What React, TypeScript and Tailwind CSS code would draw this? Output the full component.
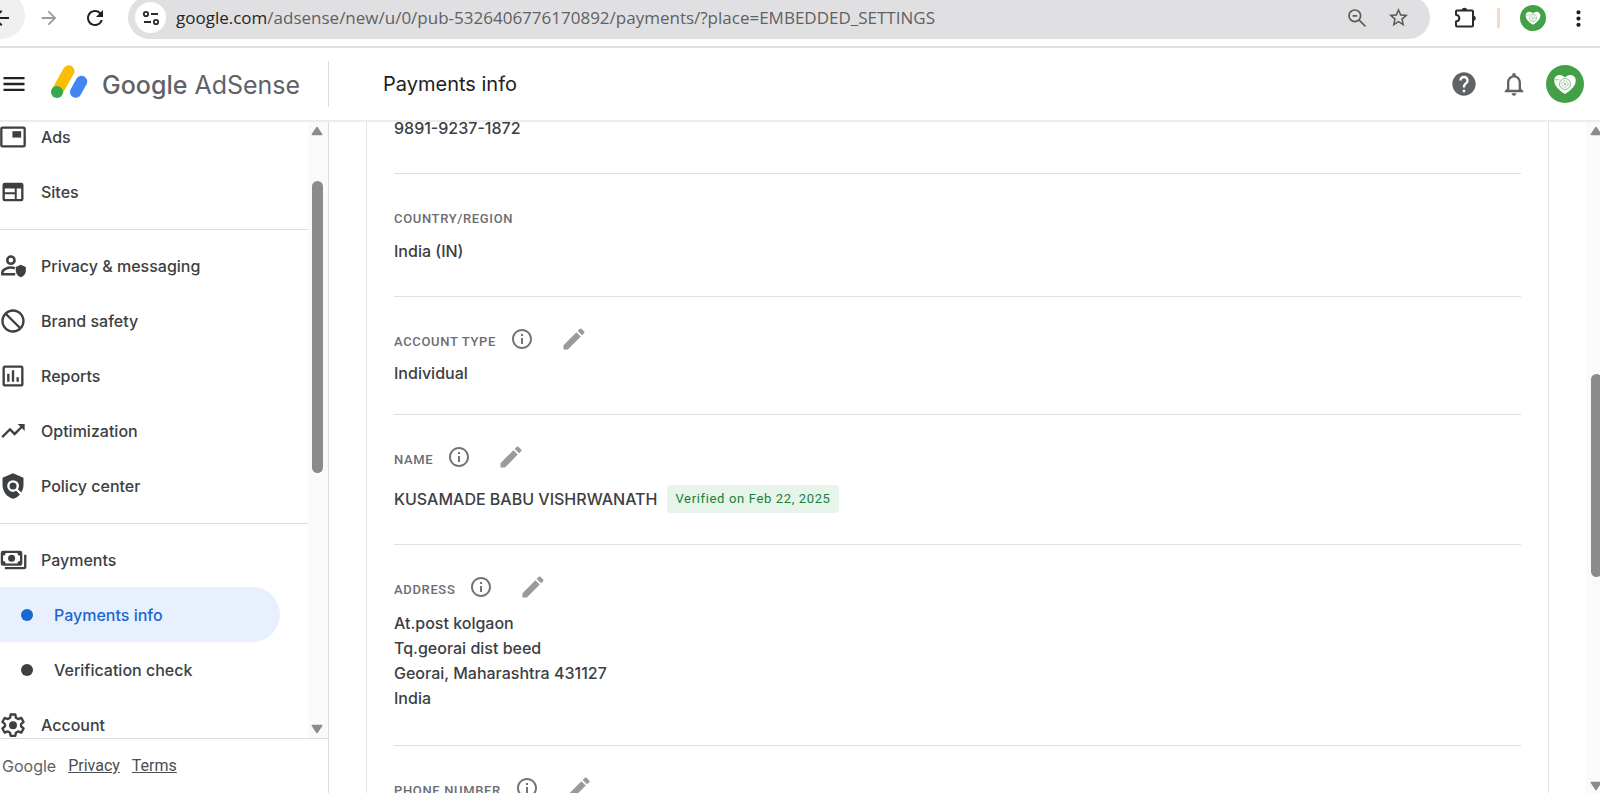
import type { ReactNode } from "react";
import {
  MdArrowBack,
  MdArrowForward,
  MdBlock,
  MdEdit,
  MdHelp,
  MdInfoOutline,
  MdMenu,
  MdMoreVert,
  MdNotificationsNone,
  MdOutlineInsertChartOutlined,
  MdPolicy,
  MdRefresh,
  MdStarOutline,
  MdTrendingUp,
} from "react-icons/md";

const ICON = "h-7 w-7 shrink-0";

function AdsIcon() {
  return (
    <svg viewBox="0 0 24 24" fill="currentColor" className={ICON}>
      <path d="M11.500 7H19v5.500h-7.500z" />
      <path fillRule="evenodd" d="M3 3h18a2 2 0 0 1 2 2v14a2 2 0 0 1-2 2H3a2 2 0 0 1-2-2V5a2 2 0 0 1 2-2zm0 2v14h18V5z" />
    </svg>
  );
}

function SitesIcon() {
  return (
    <svg viewBox="0 0 24 24" fill="currentColor" className={ICON}>
      <path
        fillRule="evenodd"
        d="M5 4h14a2 2 0 0 1 2 2v12a2 2 0 0 1-2 2H5a2 2 0 0 1-2-2V6a2 2 0 0 1 2-2zm0 5v3.300h8.500V9zm0 5v4h8.500v-4zm10.200-5v9H19V9z"
      />
    </svg>
  );
}

function PrivacyIcon() {
  return (
    <svg viewBox="0 0 24 24" className={ICON}>
      <circle cx="10.200" cy="7" r="3.100" fill="none" stroke="currentColor" strokeWidth="2.200" />
      <path d="M13.500 13.900c-1-.4-2.100-.6-3.300-.6-2.700 0-7.300 1.500-7.300 4.200v1.600h11" fill="none" stroke="currentColor" strokeWidth="2.200" />
      <path d="M18.700 11l4.300 1.900v3c0 2.700-1.800 5-4.300 5.700-2.500-.7-4.300-3-4.300-5.700v-3z" fill="currentColor" />
    </svg>
  );
}

function PaymentsIcon() {
  return (
    <svg viewBox="0 0 24 24" fill="currentColor" className={ICON}>
      <path
        fillRule="evenodd"
        d="M3.500 4H18a2 2 0 0 1 2 2v9a2 2 0 0 1-2 2H3.500a2 2 0 0 1-2-2V6a2 2 0 0 1 2-2zM5.700 6A2.200 2.200 0 0 1 3.500 8.200v4.600A2.200 2.200 0 0 1 5.700 15h10.100a2.200 2.200 0 0 1 2.200-2.200V8.200A2.200 2.200 0 0 1 15.800 6z"
      />
      <circle cx="10.800" cy="10.500" r="3" />
      <path d="M21.500 7.500h2V18a2 2 0 0 1-2 2H5v-2h16.500z" />
    </svg>
  );
}

function AccountIcon() {
  return (
    <svg viewBox="0 0 24 24" className={ICON}>
      <path
        d="M10 3h4l.5 2.800 1.900 1.100 2.700-1 2 3.500-2.200 1.800v2l2.200 1.800-2 3.500-2.700-1-1.900 1.100L14 21.300h-4l-.5-2.700-1.900-1.100-2.700 1-2-3.500 2.200-1.800v-2L2.900 9.400l2-3.500 2.700 1 1.900-1.100z"
        fill="none"
        stroke="currentColor"
        strokeWidth="2"
        strokeLinejoin="round"
      />
      <circle cx="12" cy="12.200" r="3.400" fill="currentColor" />
    </svg>
  );
}

function AdSenseLogo() {
  return (
    <svg viewBox="0 0 38 38" className="h-[38px] w-[38px] shrink-0">
      <path d="M18.700 6 L7.200 26.500" stroke="#fbbc04" strokeWidth="11.500" strokeLinecap="round" />
      <path d="M31.500 16.500 L25.700 27" stroke="#4285f4" strokeWidth="11.500" strokeLinecap="round" />
      <circle cx="7" cy="27" r="6" fill="#34a853" />
    </svg>
  );
}

function Avatar({ className }: { className: string }) {
  return (
    <svg viewBox="0 0 36 36" className={className}>
      <circle cx="18" cy="18" r="18" fill="#43a047" />
      <path
        d="M18 27.500C12 23.500 7.800 19.500 7.800 14.600c0-3 2.300-5.200 5.200-5.200 2 0 3.900 1 5 2.600 1.100-1.600 3-2.600 5-2.600 2.900 0 5.200 2.200 5.200 5.200 0 4.900-4.200 8.900-10.200 12.900z"
        fill="#fff"
      />
      <g fill="none" stroke="#43a047" strokeWidth="0.600">
        <circle cx="18" cy="18" r="5.200" />
        <circle cx="18" cy="18" r="3" strokeDasharray="2 1" />
        <path d="M18 16.800v2.400M16.800 18h2.400M8.500 14h4" />
      </g>
    </svg>
  );
}

function Triangle({ down }: { down?: boolean }) {
  return (
    <svg viewBox="0 0 12 10" className={down ? "h-[10px] w-3 shrink-0 rotate-180" : "h-[10px] w-3 shrink-0"}>
      <path d="M6 1.500 L10.700 8.500 H1.300 Z" fill="#8b8b8b" stroke="#8b8b8b" strokeWidth="1.500" strokeLinejoin="round" />
    </svg>
  );
}

function BrowserBar() {
  return (
    <div className="flex h-[46px] shrink-0 items-start overflow-hidden">
      <button aria-label="Back" className="-mt-2 -ml-6 flex h-[47px] w-[49px] items-center justify-end rounded-full bg-[#efefef] pt-1 pr-3 text-[#1f1f1f]">
        <MdArrowBack size={24} />
      </button>
      <button aria-label="Forward" className="ml-3 flex h-9 w-6 items-center justify-center text-[#9c9c9c]">
        <MdArrowForward size={22} />
      </button>
      <button aria-label="Reload" className="ml-5 flex h-9 w-7 items-center justify-center text-[#1f1f1f]">
        <MdRefresh size={24} />
      </button>
      <div className="-mt-1 ml-[19px] flex h-[43px] min-w-0 flex-1 items-center rounded-full bg-[#e0e0e2] pr-5 pl-[7px]">
        <button aria-label="Site information" className="flex h-[31px] w-[31px] shrink-0 items-center justify-center rounded-full bg-white">
          <svg viewBox="0 0 18 16" className="h-4 w-[18px]" fill="none" stroke="#2b2b2b" strokeWidth="1.800">
            <circle cx="4" cy="4" r="2.200" />
            <path d="M9 4h7M2 12h7" />
            <circle cx="14" cy="12" r="2.200" />
          </svg>
        </button>
        <div className="ml-[10px] flex-1 truncate font-['Open_Sans','Noto_Sans',sans-serif] text-[17px] text-[#5f6163]">
          <span className="text-[#242628]">google.com</span>/adsense/new/u/0/pub-5326406776170892/payments/?place=EMBEDDED_SETTINGS
        </div>
        <button aria-label="Zoom" className="text-[#5a5a5a]">
          <svg viewBox="0 0 20 20" className="h-5 w-5" fill="none" stroke="currentColor" strokeWidth="1.700">
            <circle cx="7.800" cy="7.800" r="5.800" />
            <path d="M12.200 12.200l6.300 6.300M5.500 7.800h4.600" />
          </svg>
        </button>
        <button aria-label="Bookmark this page" className="ml-5 text-[#5a5a5a]">
          <MdStarOutline size={23} />
        </button>
      </div>
      <div className="flex h-9 items-center">
        <button aria-label="Extensions" className="ml-[23px] text-[#2b2b2b]">
          <svg viewBox="0 0 24 24" className="h-6 w-6" fill="none" stroke="currentColor" strokeWidth="2">
            <path
              d="M4 4.500h15a1 1 0 0 1 1 1v14a1 1 0 0 1-1 1H4a1 1 0 0 1-1-1v-4c2.200-.3 3.300-1.600 3.300-3.300S5.200 9 3 8.700V5.500a1 1 0 0 1 1-1z"
              strokeLinejoin="round"
            />
            <path d="M8.800 4.500a2.700 2.700 0 0 1 5.400 0zM20 9.500a2.700 2.700 0 0 1 0 5.400z" fill="currentColor" stroke="none" />
          </svg>
        </button>
        <span className="ml-5 h-5 w-[3px] bg-[#f9d9c6]" />
        <button aria-label="Profile" className="ml-5">
          <Avatar className="h-[26px] w-[26px]" />
        </button>
        <button aria-label="Browser menu" className="mr-[9px] ml-5 text-[#1f1f1f]">
          <MdMoreVert size={25} />
        </button>
      </div>
    </div>
  );
}

function AppHeader() {
  return (
    <header className="flex h-[76px] shrink-0 items-center border-t-2 border-b-2 border-t-[#e0e0e0] border-b-[#ececec]">
      <div className="flex h-[46px] w-[329px] shrink-0 items-center border-r border-[#dadce0]">
        <button aria-label="Main menu" className="text-[#202124]">
          <MdMenu size={28} />
        </button>
        <a href="#home" className="ml-[22px] flex items-center text-[#5f6368]">
          <AdSenseLogo />
          <span className="ml-[14px] pt-1 font-[Inter,sans-serif] text-[25px]">
            <span className="font-medium">Google</span> AdSense
          </span>
        </a>
      </div>
      <h1 className="ml-[54px] flex-1 font-[Inter,sans-serif] text-[20px] text-[#202124]">Payments info</h1>
      <div className="flex items-center pr-4 text-[#5f6368]">
        <button aria-label="Help">
          <MdHelp size={28} />
        </button>
        <button aria-label="Notifications" className="ml-[22px]">
          <MdNotificationsNone size={28} />
        </button>
        <button aria-label="Account" className="ml-[18px]">
          <Avatar className="h-[38px] w-[38px]" />
        </button>
      </div>
    </header>
  );
}

const NAV: { label: string; icon: ReactNode }[][] = [
  [
    { label: "Ads", icon: <AdsIcon /> },
    { label: "Sites", icon: <SitesIcon /> },
  ],
  [
    { label: "Privacy & messaging", icon: <PrivacyIcon /> },
    { label: "Brand safety", icon: <MdBlock className="h-7 w-7 shrink-0 -scale-x-100" /> },
    { label: "Reports", icon: <MdOutlineInsertChartOutlined className={ICON} /> },
    { label: "Optimization", icon: <MdTrendingUp className={ICON} /> },
    { label: "Policy center", icon: <MdPolicy className={ICON} /> },
  ],
];

function NavItem({ label, icon }: { label: string; icon: ReactNode }) {
  return (
    <a href="#nav" className="-ml-px flex h-[55px] items-center gap-[14px]">
      {icon}
      {label}
    </a>
  );
}

function SubItem({ label, active }: { label: string; active?: boolean }) {
  return (
    <a
      href="#nav"
      className={
        active
          ? "mr-7 flex h-[55px] items-center gap-[21px] rounded-r-full bg-[#e8f0fe] pl-[21px] text-[#1967d2]"
          : "mr-7 flex h-[55px] items-center gap-[21px] pl-[21px]"
      }
    >
      <span className="h-3 w-3 rounded-full bg-current" />
      {label}
    </a>
  );
}

function Sidebar() {
  return (
    <aside className="flex w-[329px] shrink-0 flex-col border-r border-[#dadce0]">
      <div className="flex min-h-0 flex-1 border-b border-[#dadce0]">
        <nav className="-mt-[13px] flex-1 font-[Inter,sans-serif] text-[16px] font-medium text-[#3c4043]">
          {NAV.map((group) => (
            <div key={group[0].label} className="mb-2 border-b border-[#dadce0] pb-[10px]">
              {group.map((item) => (
                <NavItem key={item.label} {...item} />
              ))}
            </div>
          ))}
          <NavItem label="Payments" icon={<PaymentsIcon />} />
          <SubItem label="Payments info" active />
          <SubItem label="Verification check" />
          <NavItem label="Account" icon={<AccountIcon />} />
        </nav>
        <div className="flex w-5 flex-col items-center bg-[#fafafa] pt-1 pr-[2px] pb-1">
          <Triangle />
          <div className="mt-[45px] h-[292px] w-[11px] rounded-full bg-[#8b8b8b]" />
          <div className="flex-1" />
          <Triangle down />
        </div>
      </div>
      <footer className="flex h-[54px] shrink-0 items-center gap-3 pl-[2px] font-[Roboto,sans-serif] text-[16px] text-[#4a4d51]">
        <span className="font-[Inter,sans-serif] text-[#5f6368]">Google</span>
        <a href="#privacy" className="underline">Privacy</a>
        <a href="#terms" className="underline">Terms</a>
      </footer>
    </aside>
  );
}

function Field({ label, editable, className, children }: { label: string; editable?: boolean; className: string; children: ReactNode }) {
  return (
    <section className="border-b border-[#dfdfdf] pt-8">
      <div className="flex h-6 items-center">
        <h2 className="font-[Roboto,sans-serif] text-[13px] font-medium tracking-wider text-[#6b6e72] uppercase">{label}</h2>
        {editable && (
          <>
            <button aria-label={`About ${label}`} className="-mt-1 ml-[14px] text-[#747474]">
              <MdInfoOutline size={24} />
            </button>
            <button aria-label={`Edit ${label}`} className="-mt-1 ml-[26px] text-[#9a9a9a]">
              <MdEdit size={28} />
            </button>
          </>
        )}
      </div>
      <div className={className}>{children}</div>
    </section>
  );
}

function PaymentsProfile() {
  return (
    <main className="flex min-w-0 flex-1 overflow-hidden pl-[37px]">
      <div className="mr-[37px] h-full flex-1 border-x border-[#e4e4e4] px-[27px] font-[Inter,sans-serif] text-[16px] leading-[25px] font-medium text-[#3c4043]">
        <p className="-mt-[6px] border-b border-[#dfdfdf] pb-8">9891-9237-1872</p>
        <Field label="Country/region" className="mt-[9px] pb-8">
          India (IN)
        </Field>
        <Field label="Account type" editable className="mt-2 pb-7">
          Individual
        </Field>
        <Field label="Name" editable className="mt-[14px] flex items-center gap-[10px] pb-[31px]">
          <span>KUSAMADE BABU VISHRWANATH</span>
          <span className="rounded bg-[#e6f4ea] px-2 font-[Roboto,sans-serif] text-[13px] leading-7 font-normal tracking-wider text-[#188038]">
            Verified on Feb 22, 2025
          </span>
        </Field>
        <Field label="Address" editable className="mt-[10px] pb-[34px]">
          <address className="not-italic">
            At.post kolgaon
            <br />
            Tq.georai dist beed
            <br />
            Georai, Maharashtra 431127
            <br />
            India
          </address>
        </Field>
        <Field label="Phone number" editable className="mt-2 pb-8">
          {null}
        </Field>
      </div>
      {/* page scrollbar, runs a little past the window edge */}
      <div className="-mr-[2px] flex w-4 shrink-0 flex-col items-end bg-[#fafafa] pt-1 pb-[2px]">
        <Triangle />
        <div className="mt-[238px] h-[203px] w-[11px] rounded-full bg-[#8b8b8b]" />
        <div className="flex-1" />
        <Triangle down />
      </div>
    </main>
  );
}

export default function App() {
  return (
    <div className="flex h-screen flex-col overflow-hidden bg-white">
      <BrowserBar />
      <AppHeader />
      <div className="flex min-h-0 flex-1">
        <Sidebar />
        <PaymentsProfile />
      </div>
    </div>
  );
}
